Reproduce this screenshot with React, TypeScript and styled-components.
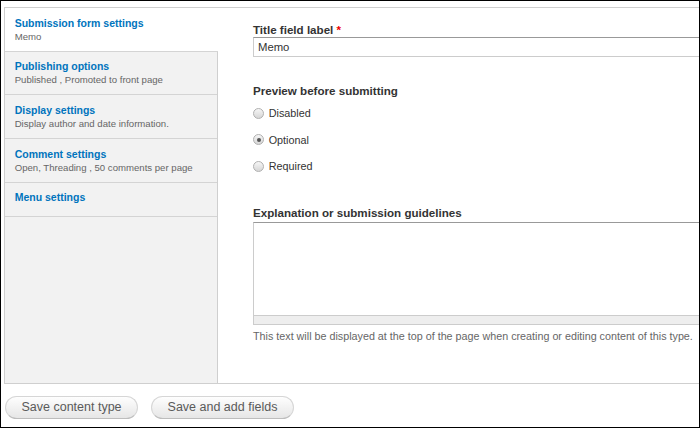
import React from 'react';
import styled, { createGlobalStyle } from 'styled-components';

const GlobalStyle = createGlobalStyle`
    html, body {
        margin: 0;
        padding: 0;
        background: #fff;
    }
    body {
        font-family: "Liberation Sans", Arial, sans-serif;
        color: #333;
    }
`

interface TabData {
    title: string;
    summary?: string;
}

const tabs: TabData[] = [
    { title: 'Submission form settings', summary: 'Memo' },
    { title: 'Publishing options', summary: 'Published , Promoted to front page' },
    { title: 'Display settings', summary: 'Display author and date information.' },
    { title: 'Comment settings', summary: 'Open, Threading , 50 comments per page' },
    { title: 'Menu settings' },
];

const previewOptions = ['Disabled', 'Optional', 'Required'];

const Frame = styled.div`
    width: 700px;
    height: 428px;
    box-sizing: border-box;
    border: 1px solid #000;
    padding: 6px 0 0 3px;
    overflow: hidden;
    background: #fff;
`
const VerticalTabs = styled.div`
    display: flex;
    width: 760px;
    height: 377px;
    box-sizing: border-box;
    border: 1px solid #cfcfcf;
`
const TabList = styled.ul`
    list-style: none;
    margin: 0;
    padding: 0;
    width: 213px;
    box-sizing: border-box;
    flex-shrink: 0;
    background: #f2f2f2;
    border-right: 1px solid #cfcfcf;
`
const TabItem = styled.li<{ selected?: boolean; single?: boolean }>`
    padding: 8.5px 10px ${props => props.single ? '11.5px' : '8.2px'} 9.7px;
    border-bottom: 1px solid #d4d4d4;
    background: ${props => props.selected ? '#fff' : 'transparent'};
    margin-right: ${props => props.selected ? '-1px' : '0'};
    position: relative;
    cursor: pointer;
`
const TabTitle = styled.a`
    display: block;
    font-size: 10.5px;
    line-height: 13px;
    font-weight: bold;
    color: #0074bd;
    text-decoration: none;
`
const TabSummary = styled.div`
    font-size: 9.6px;
    line-height: 13px;
    color: #666;
`
const Pane = styled.div`
    flex: 1;
    padding: 13.8px 0 0 35px;
`
const FieldLabel = styled.label`
    display: block;
    font-size: 11.6px;
    line-height: 15px;
    font-weight: bold;
    color: #333;
`
const Required = styled.span`
    color: #e00;
`
const TextInput = styled.input`
    display: block;
    width: 100%;
    height: 20px;
    box-sizing: border-box;
    margin: 0.6px 0 0;
    padding: 0 4px;
    border: 1px solid #ccc;
    border-top-color: #999;
    font-family: "Liberation Sans", Arial, sans-serif;
    font-size: 11.3px;
    color: #333;
    outline: none;
`
const Section = styled.div<{ gap: number }>`
    margin-top: ${props => props.gap}px;
`
const RadioList = styled.div`
    display: flex;
    flex-direction: column;
    gap: 10.7px;
    margin-top: 7px;
`
const RadioRow = styled.label`
    display: flex;
    align-items: center;
    height: 16px;
    font-size: 10.8px;
    color: #333;
`
const RadioCircle = styled.input`
    appearance: none;
    -webkit-appearance: none;
    width: 11px;
    height: 11px;
    margin: 0 4.5px 0 0.2px;
    box-sizing: border-box;
    border-radius: 50%;
    border: 1px solid #b0b0b0;
    background: linear-gradient(#f6f6f6, #d6d6d6);
    position: relative;

    &:checked::after {
        content: '';
        position: absolute;
        left: 2.5px;
        top: 2.5px;
        width: 4px;
        height: 4px;
        border-radius: 50%;
        background: #555;
    }
`
const TextArea = styled.textarea`
    display: block;
    width: 100%;
    height: 94px;
    box-sizing: border-box;
    margin: 1.6px 0 0;
    border: 1px solid #ccc;
    border-top-color: #999;
    resize: none;
    outline: none;
`
const Grippie = styled.div`
    height: 9px;
    box-sizing: border-box;
    background: #eee;
    border: 1px solid #ccc;
    border-top: 0;
`
const Description = styled.div`
    margin-top: 4.2px;
    font-size: 10.75px;
    line-height: 14px;
    color: #666;
`
const Actions = styled.div`
    display: flex;
    gap: 13px;
    margin: 11.8px 0 0 1px;
`
const Button = styled.button`
    height: 23px;
    box-sizing: border-box;
    padding: 0 15.5px;
    border: 1px solid #d6d6d6;
    border-bottom-color: #bdbdbd;
    border-radius: 20px;
    background: linear-gradient(#fefefe, #e6e6e6);
    font-family: "Liberation Sans", Arial, sans-serif;
    font-size: 12.5px;
    color: #5a5a5a;
    cursor: pointer;
`

const App: React.FC = () => {
    const [activeTab, setActiveTab] = React.useState(0);
    const [title, setTitle] = React.useState('Memo');
    const [preview, setPreview] = React.useState('Optional');

    return (
        <>
            <GlobalStyle />
            <Frame>
                <VerticalTabs>
                    <TabList>
                        {tabs.map((tab, i) => (
                            <TabItem
                                key={tab.title}
                                selected={i === activeTab}
                                single={!tab.summary}
                                onClick={() => setActiveTab(i)}
                            >
                                <TabTitle>{tab.title}</TabTitle>
                                {tab.summary && <TabSummary>{tab.summary}</TabSummary>}
                            </TabItem>
                        ))}
                    </TabList>
                    <Pane>
                        <FieldLabel>Title field label <Required>*</Required></FieldLabel>
                        <TextInput value={title} onChange={e => setTitle(e.target.value)} />

                        <Section gap={25.7}>
                            <FieldLabel>Preview before submitting</FieldLabel>
                            <RadioList>
                                {previewOptions.map(option => (
                                    <RadioRow key={option}>
                                        <RadioCircle
                                            type='radio'
                                            name='preview'
                                            checked={preview === option}
                                            onChange={() => setPreview(option)}
                                        />
                                        {option}
                                    </RadioRow>
                                ))}
                            </RadioList>
                        </Section>

                        <Section gap={30.7}>
                            <FieldLabel>Explanation or submission guidelines</FieldLabel>
                            <TextArea />
                            <Grippie />
                            <Description>
                                This text will be displayed at the top of the page when creating or editing content of this type.
                            </Description>
                        </Section>
                    </Pane>
                </VerticalTabs>
                <Actions>
                    <Button>Save content type</Button>
                    <Button>Save and add fields</Button>
                </Actions>
            </Frame>
        </>
    )
}

export default App;
